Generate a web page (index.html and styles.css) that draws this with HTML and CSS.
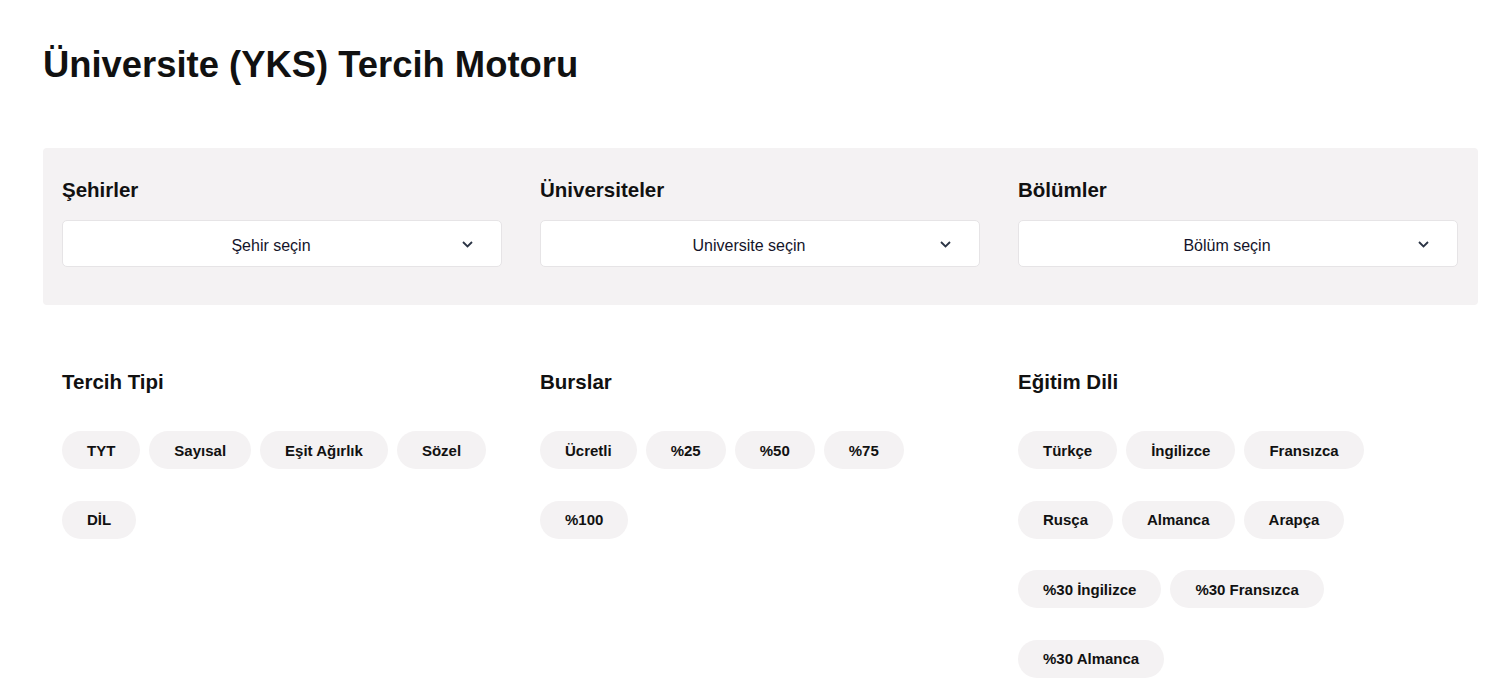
FILE: index.html
```html
<!DOCTYPE html>
<html lang="tr">

<head>
    <meta charset="UTF-8">
    <title>Üniversite (YKS) Tercih Motoru</title>
    <link rel="stylesheet" href="styles.css">
</head>

<body>
    <div class="page">
        <h1 class="title">Üniversite (YKS) Tercih Motoru</h1>

        <div class="filter-panel">
            <div class="filter-col">
                <h3 class="col-label">Şehirler</h3>
                <div class="select-box">
                    <span class="select-text">Şehir seçin</span>
                    <svg class="chevron" width="11" height="7" viewBox="0 0 11 7"><path d="M1 1l4.5 4.5L10 1" fill="none" stroke="#2b3445" stroke-width="1.8"/></svg>
                </div>
            </div>
            <div class="filter-col">
                <h3 class="col-label">Üniversiteler</h3>
                <div class="select-box">
                    <span class="select-text">Universite seçin</span>
                    <svg class="chevron" width="11" height="7" viewBox="0 0 11 7"><path d="M1 1l4.5 4.5L10 1" fill="none" stroke="#2b3445" stroke-width="1.8"/></svg>
                </div>
            </div>
            <div class="filter-col">
                <h3 class="col-label">Bölümler</h3>
                <div class="select-box">
                    <span class="select-text">Bölüm seçin</span>
                    <svg class="chevron" width="11" height="7" viewBox="0 0 11 7"><path d="M1 1l4.5 4.5L10 1" fill="none" stroke="#2b3445" stroke-width="1.8"/></svg>
                </div>
            </div>
        </div>

        <div class="option-panel">
            <div class="filter-col">
                <h3 class="col-label">Tercih Tipi</h3>
                <div class="chip-group">
                    <button class="chip">TYT</button>
                    <button class="chip">Sayısal</button>
                    <button class="chip">Eşit Ağırlık</button>
                    <button class="chip">Sözel</button>
                    <button class="chip">DİL</button>
                </div>
            </div>
            <div class="filter-col">
                <h3 class="col-label">Burslar</h3>
                <div class="chip-group">
                    <button class="chip">Ücretli</button>
                    <button class="chip">%25</button>
                    <button class="chip">%50</button>
                    <button class="chip">%75</button>
                    <button class="chip">%100</button>
                </div>
            </div>
            <div class="filter-col">
                <h3 class="col-label">Eğitim Dili</h3>
                <div class="chip-group">
                    <button class="chip">Türkçe</button>
                    <button class="chip">İngilizce</button>
                    <button class="chip">Fransızca</button>
                    <button class="chip">Rusça</button>
                    <button class="chip">Almanca</button>
                    <button class="chip">Arapça</button>
                    <button class="chip">%30 İngilizce</button>
                    <button class="chip">%30 Fransızca</button>
                    <button class="chip">%30 Almanca</button>
                </div>
            </div>
        </div>
    </div>
</body>

</html>
```

FILE: styles.css
```css
body {
    margin: 0;
    font-family: "Liberation Sans", Arial, sans-serif;
    color: #111;
    background: #fff;
}

.page {
    padding: 44px 21px 0 43px;
}

.title {
    margin: 0;
    font-size: 36.4px;
    font-weight: bold;
    line-height: 41px;
    color: #111;
}

.filter-panel,
.option-panel {
    display: grid;
    grid-template-columns: repeat(3, 440px);
    column-gap: 38px;
    padding: 0 19px;
}

.filter-panel {
    margin-top: 63px;
    padding-top: 30px;
    padding-bottom: 38px;
    background-color: #f4f2f3;
    border-radius: 4px;
}

.option-panel {
    margin-top: 65px;
}

.col-label {
    margin: 0;
    font-size: 20.5px;
    font-weight: bold;
    line-height: 23px;
}

.select-box {
    position: relative;
    margin-top: 19px;
    height: 47px;
    box-sizing: border-box;
    background: white;
    border: 1px solid #e6e4e6;
    border-radius: 5px;
    display: flex;
    align-items: center;
    padding: 5px 22px 0 0;
}

.select-text {
    flex: 1;
    text-align: center;
    font-size: 16px;
    color: #14142a;
}

.chevron {
    position: absolute;
    right: 28px;
    top: 20px;
}

.chip-group {
    margin-top: 38px;
    display: flex;
    flex-wrap: wrap;
    column-gap: 9px;
    row-gap: 31.5px;
}

.chip {
    height: 38px;
    padding: 0 25px;
    border: none;
    border-radius: 19px;
    background-color: #f4f2f3;
    font-family: inherit;
    font-size: 15px;
    font-weight: bold;
    color: #111;
    cursor: pointer;
}
```
